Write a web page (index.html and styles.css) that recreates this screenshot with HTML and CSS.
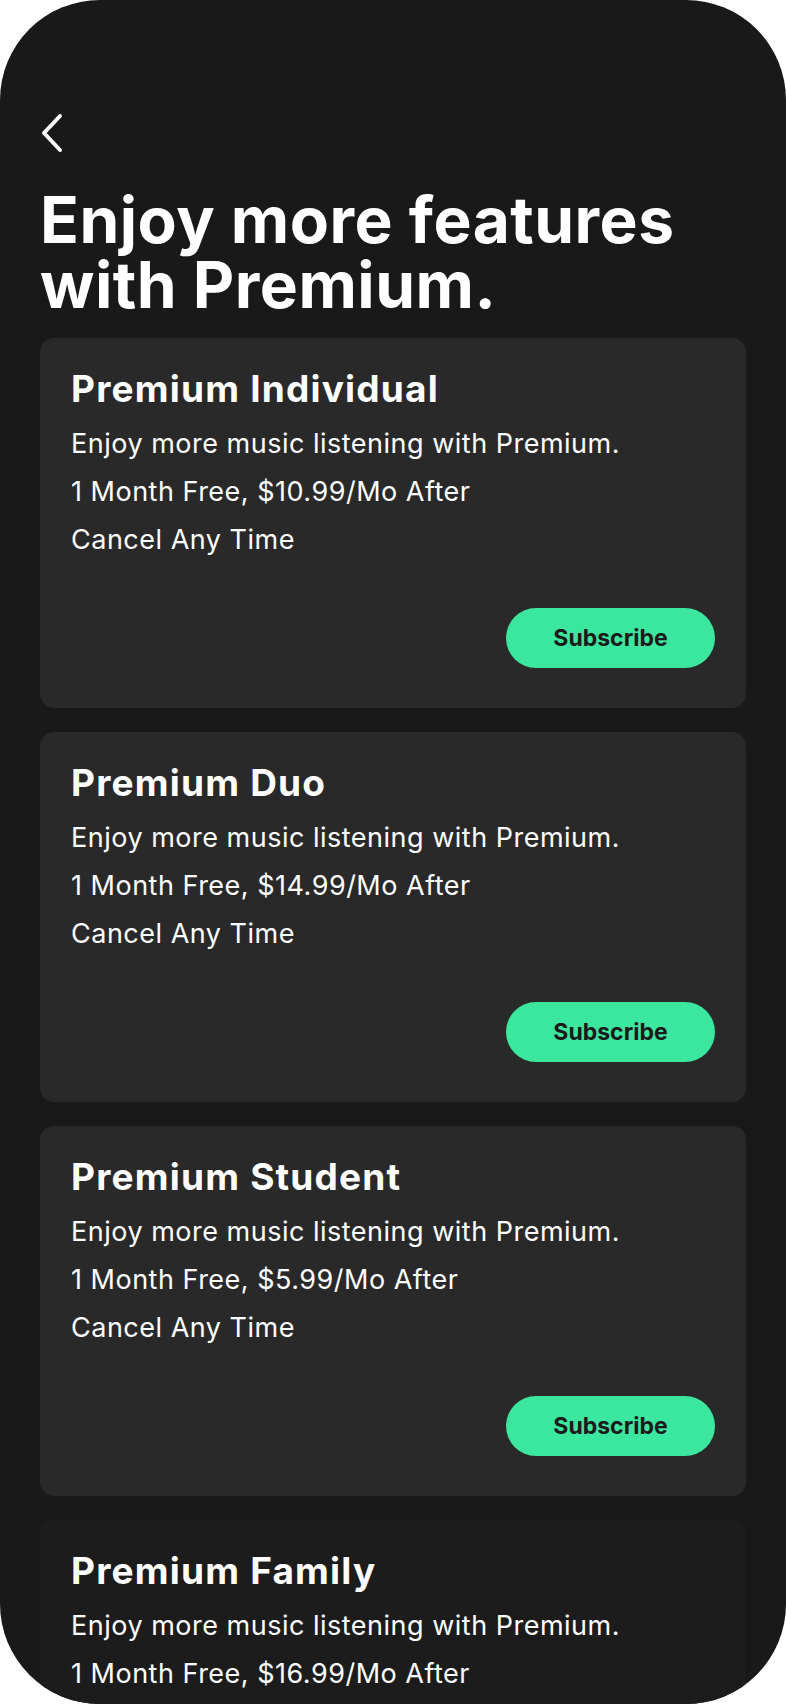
FILE: index.html
```html
<!DOCTYPE html>
<html>
	<head>
		<meta charset="UTF-8">
		<title>Premium</title>
		<link rel="stylesheet" href="styles.css">
	</head>
	<body>
		<div class="phone">
			<!--返回-->
			<div class="back">
				<svg width="24" height="40" viewBox="0 0 24 40">
					<path d="M20 3 L4 20 L20 37" fill="none" stroke="#fff" stroke-width="4" stroke-linecap="round" stroke-linejoin="round"/>
				</svg>
			</div>
			<h1 class="title">Enjoy more features with Premium.</h1>
			<!--套餐列表-->
			<ul class="plans">
				<li class="plan">
					<h2>Premium Individual</h2>
					<p>Enjoy more music listening with Premium.</p>
					<p>1 Month Free, $10.99/Mo After</p>
					<p>Cancel Any Time</p>
					<div class="btn">Subscribe</div>
				</li>
				<li class="plan">
					<h2>Premium Duo</h2>
					<p>Enjoy more music listening with Premium.</p>
					<p>1 Month Free, $14.99/Mo After</p>
					<p>Cancel Any Time</p>
					<div class="btn">Subscribe</div>
				</li>
				<li class="plan">
					<h2>Premium Student</h2>
					<p>Enjoy more music listening with Premium.</p>
					<p>1 Month Free, $5.99/Mo After</p>
					<p>Cancel Any Time</p>
					<div class="btn">Subscribe</div>
				</li>
				<li class="plan dim">
					<h2>Premium Family</h2>
					<p>Enjoy more music listening with Premium.</p>
					<p>1 Month Free, $16.99/Mo After</p>
					<p>Cancel Any Time</p>
					<div class="btn">Subscribe</div>
				</li>
			</ul>
		</div>
	</body>
</html>
```

FILE: styles.css
```css
*{
	margin: 0;
	padding: 0;
	list-style: none;
	box-sizing: border-box;
}
body{
	background: #fff;
	font-family: "Inter", "Noto Sans", sans-serif;
}
.phone{
	width: 786px;
	height: 1704px;
	background: #191919;
	border-radius: 100px;
	overflow: hidden;
	padding: 0 40px;
	color: #fff;
}
.back{
	padding-top: 113px;
	height: 153px;
}
.back svg{
	display: block;
}
.title{
	font-size: 64px;
	line-height: 65px;
	font-weight: 700;
	letter-spacing: 0.5px;
	margin-top: 34px;
}
.plans{
	display: flex;
	flex-direction: column;
	gap: 24px;
	margin-top: 21px;
}
.plan{
	height: 370px;
	background: #292929;
	border-radius: 14px;
	padding: 28px 31px 40px;
	display: flex;
	flex-direction: column;
}
.plan.dim{
	background: #1c1c1c;
}
.plan h2{
	font-size: 37px;
	line-height: 46px;
	font-weight: 700;
	letter-spacing: 1.2px;
	margin-bottom: 8px;
}
.plan p{
	font-size: 27px;
	line-height: 48px;
	letter-spacing: 0.5px;
}
.btn{
	margin-top: auto;
	align-self: flex-end;
	width: 209px;
	height: 60px;
	border-radius: 30px;
	background: #3be79e;
	color: #1b1b1b;
	font-size: 23px;
	font-weight: 700;
	line-height: 60px;
	text-align: center;
}
```
